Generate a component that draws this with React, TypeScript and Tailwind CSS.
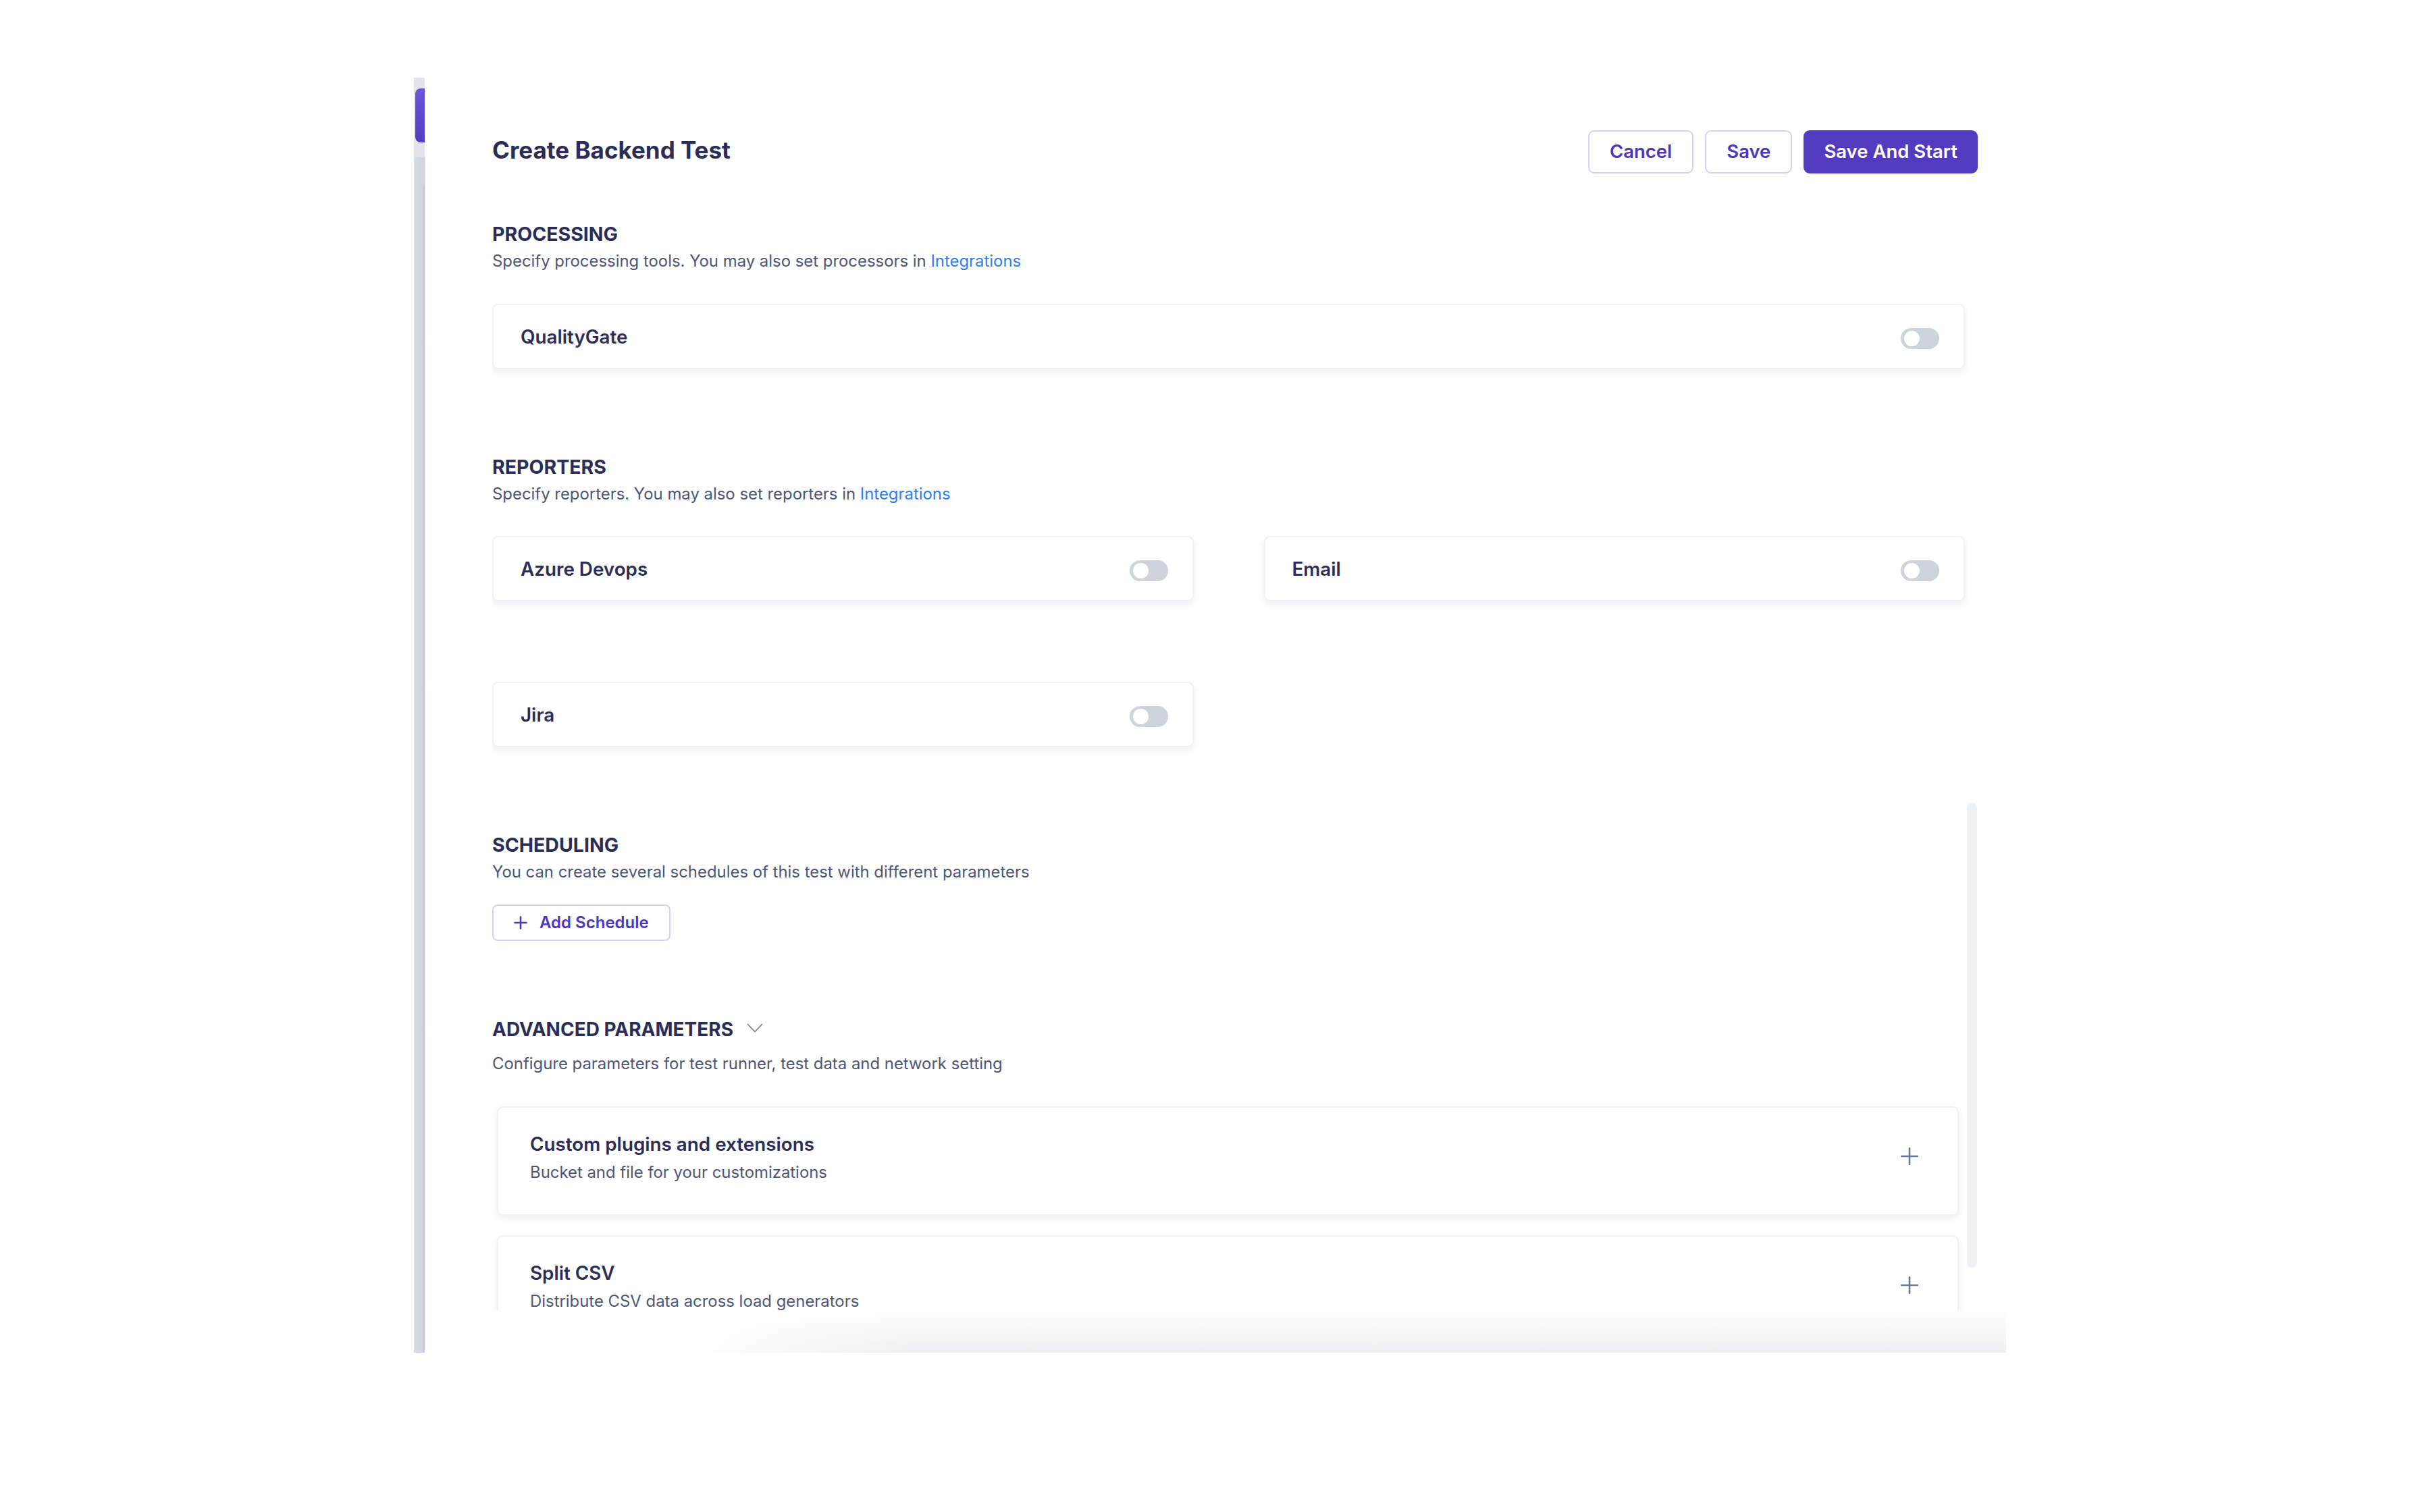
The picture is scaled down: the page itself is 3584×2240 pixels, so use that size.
import React from "react";

const Toggle = ({ shift = false }: { shift?: boolean }) => (
  <div className={`w-[57px] h-[31px] rounded-full bg-[#cfd4dc] flex items-center pl-[5px] shrink-0 ${shift ? "mt-[6px]" : ""}`}>
    <div className="w-[23px] h-[23px] rounded-full bg-white" />
  </div>
);

const ToggleCard = ({ label, shift }: { label: string; shift?: boolean }) => (
  <div className="h-[97px] rounded-[9px] border-2 border-[#f1f2f5] bg-white shadow-[0_4px_8px_rgba(30,35,70,0.07)] flex items-center justify-between pl-[40px] pr-[36px]">
    <span className="text-[27.8px] leading-[34px] font-semibold text-[#2b2d56]">{label}</span>
    <Toggle shift={shift} />
  </div>
);

const SectionHead = ({ title, desc, link }: { title: string; desc: string; link?: boolean }) => (
  <div>
    <div className="text-[28.5px] leading-[34px] font-bold text-[#2b2d56]">{title}</div>
    <div className="mt-[7px] text-[23.9px] leading-[32px] text-[#4e5675]">
      {desc}
      {link && <span className="text-[#2f7df6]">Integrations</span>}
    </div>
  </div>
);

const PlusIcon = () => (
  <svg width="26" height="26" viewBox="0 0 26 26" fill="none">
    <path d="M13 1v24M1 13h24" stroke="#6f7893" strokeWidth="2.6" strokeLinecap="round" />
  </svg>
);

const AdvCard = ({ title, sub }: { title: string; sub: string }) => (
  <div className="h-[162px] shrink-0 ml-[7px] mr-[9px] rounded-[9px] border-2 border-[#f1f2f5] bg-white shadow-[0_4px_8px_rgba(30,35,70,0.07)] flex items-center justify-between pl-[47px] pr-[58px]">
    <div className="pb-[10px]">
      <div className="text-[27.8px] leading-[34px] font-semibold text-[#2b2d56]">{title}</div>
      <div className="mt-[9px] text-[23.9px] leading-[32px] text-[#4e5675]">{sub}</div>
    </div>
    <div className="pb-[15px]">
      <PlusIcon />
    </div>
  </div>
);

export default function App() {
  return (
    <div className="w-[3584px] h-[2240px] bg-white pl-[613px] pt-[115px] font-['Inter',sans-serif]">
      <div className="flex w-[2358px] h-[1889px]">
        {/* left rail */}
        <div className="w-[16px] flex flex-col shrink-0">
          <div className="h-[118px] bg-[#e3e3e9] pt-[16px] pl-[2px]">
            <div className="h-[80px] rounded-l-[8px] bg-gradient-to-b from-[#6c56de] to-[#543bc2]" />
          </div>
          <div className="flex-1 flex bg-gradient-to-r from-[#d9dbe7] to-[#d1d3e0]">
            <div className="flex-1" />
            <div className="w-[3px] mt-[40px] rounded-tl-[4px] bg-[#c9cbd9]" />
          </div>
        </div>

        {/* main */}
        <div className="relative flex-1 flex flex-col pl-[100px] pr-[42px]">
          {/* header */}
          <div className="flex items-start justify-between pt-[78px] shrink-0">
            <h1 className="mt-[7px] text-[35px] leading-[44px] font-bold text-[#2b2d56]">Create Backend Test</h1>
            <div className="flex gap-[17px]">
              <button className="h-[64px] px-[30px] rounded-[9px] border-2 border-[#d6d1f2] bg-white text-[27.5px] font-semibold text-[#4e37bd]">Cancel</button>
              <button className="h-[64px] px-[30px] rounded-[9px] border-2 border-[#d6d1f2] bg-white text-[27.5px] font-semibold text-[#4e37bd]">Save</button>
              <button className="h-[64px] px-[30px] rounded-[9px] bg-[#533bbf] text-[27.5px] font-semibold text-white">Save And Start</button>
            </div>
          </div>

          {/* scroll region */}
          <div className="flex-1 overflow-hidden pr-[19px] flex flex-col">
            <div className="mt-[73px]">
              <SectionHead title="PROCESSING" desc="Specify processing tools. You may also set processors in " link />
              <div className="mt-[47px]">
                <ToggleCard label="QualityGate" shift />
              </div>
            </div>

            <div className="mt-[128px]">
              <SectionHead title="REPORTERS" desc="Specify reporters. You may also set reporters in " link />
              <div className="mt-[46px] grid grid-cols-2 gap-x-[104px] gap-y-[119px]">
                <ToggleCard label="Azure Devops" shift />
                <ToggleCard label="Email" shift />
                <ToggleCard label="Jira" shift />
              </div>
            </div>

            <div className="mt-[128px]">
              <SectionHead title="SCHEDULING" desc="You can create several schedules of this test with different parameters" />
              <button className="mt-[32px] h-[54px] w-[264px] rounded-[8px] border-2 border-[#d6d1f2] bg-white flex items-center pl-[30px] gap-[18px]">
                <svg width="20" height="20" viewBox="0 0 20 20" fill="none">
                  <path d="M10 1.5v17M1.5 10h17" stroke="#4e37bd" strokeWidth="2.6" strokeLinecap="round" />
                </svg>
                <span className="text-[24px] font-semibold text-[#4e37bd]">Add Schedule</span>
              </button>
            </div>

            <div className="mt-[114px] flex items-center gap-[20px]">
              <span className="text-[28px] leading-[34px] font-bold text-[#2b2d56]">ADVANCED PARAMETERS</span>
              <svg width="24" height="14" viewBox="0 0 24 14" fill="none" className="mb-[4px]">
                <path d="M1.5 1.5l10.5 11 10.5-11" stroke="#7d839b" strokeWidth="1.8" strokeLinecap="round" strokeLinejoin="round" />
              </svg>
            </div>
            <div className="mt-[18px] text-[23.9px] leading-[32px] text-[#4e5675]">
              Configure parameters for test runner, test data and network setting
            </div>
            <div className="mt-[47px] flex flex-col gap-[29px]">
              <AdvCard title="Custom plugins and extensions" sub="Bucket and file for your customizations" />
              <AdvCard title="Split CSV" sub="Distribute CSV data across load generators" />
            </div>
          </div>

          {/* footer fade */}
          <div className="h-[63px] shrink-0 -mr-[42px] ml-[300px] bg-[linear-gradient(to_bottom,#ffffff,#efeff1)] [mask-image:linear-gradient(to_right,transparent,black_320px)]" />

          {/* scrollbar */}
          <div className="absolute right-[43px] top-[1074px] w-[15px] h-[689px] rounded-full bg-[#eef0f4]" />
        </div>
      </div>
    </div>
  );
}
